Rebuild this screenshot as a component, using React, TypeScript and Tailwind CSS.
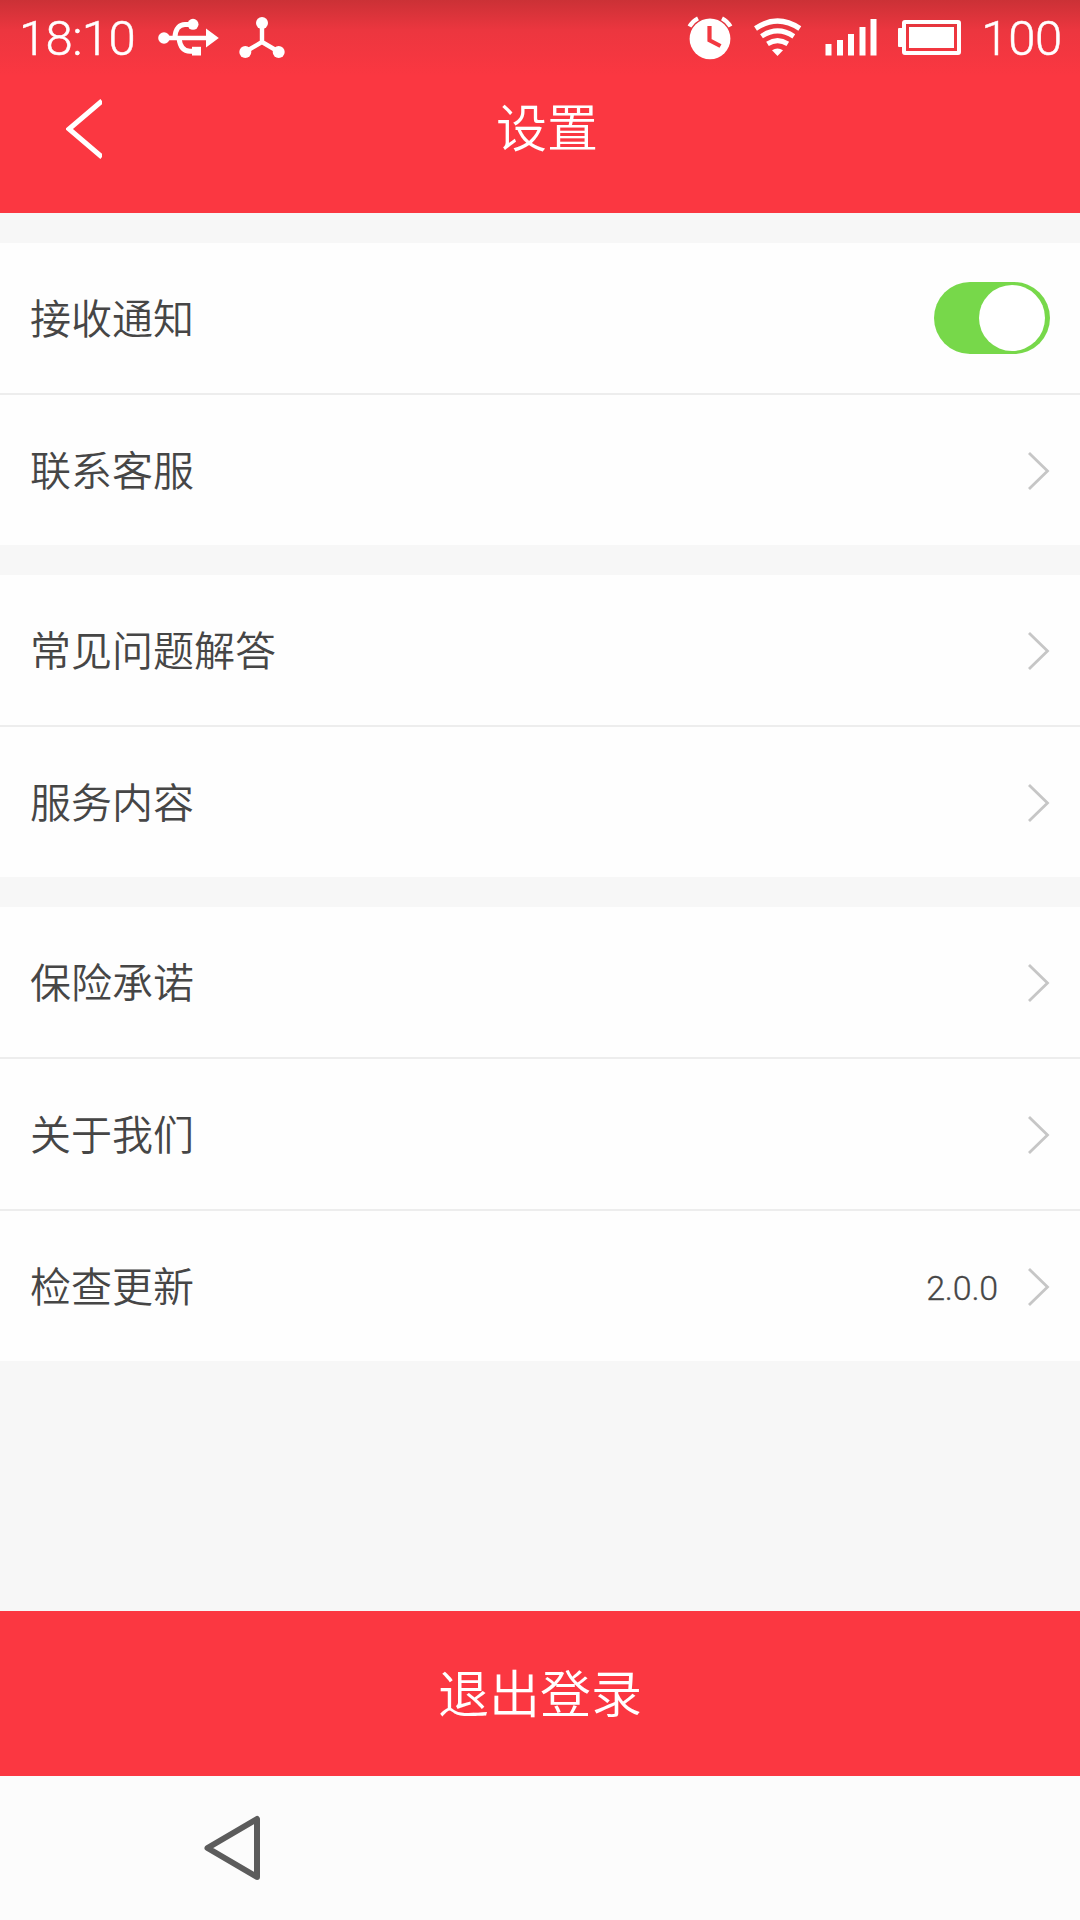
import type { ReactNode } from 'react';

function UsbIcon() {
  return (
    <svg className="absolute left-[158px] top-[18px]" width="61" height="39" viewBox="158 18 61 39" fill="none">
      <path d="M165 38H208" stroke="#fff" strokeWidth="4.4" />
      <circle cx="164" cy="38" r="5.8" fill="#fff" />
      <path d="M206 28.5L218.8 38L206 47.5Z" fill="#fff" />
      <path d="M175 37C175.500 28 180 24.500 185 24.500H192" stroke="#fff" strokeWidth="5" />
      <path d="M179 38C180 47 184 51.300 190 51.300H195" stroke="#fff" strokeWidth="5" />
      <circle cx="193" cy="24.300" r="5.500" fill="#fff" />
      <rect x="192" y="46.800" width="9" height="8.700" fill="#fff" />
    </svg>
  );
}

function HubIcon() {
  return (
    <svg className="absolute left-[238px] top-[16px]" width="48" height="44" viewBox="238 16 48 44" fill="none">
      <path d="M262 23V42L245 52M262 42L279 52" stroke="#fff" strokeWidth="4.400" />
      <circle cx="262" cy="23" r="6" fill="#fff" />
      <circle cx="245.300" cy="52" r="6" fill="#fff" />
      <circle cx="278.700" cy="52" r="6" fill="#fff" />
    </svg>
  );
}

function SystemIcons() {
  return (
    <svg className="absolute left-[684px] top-[12px]" width="284" height="52" viewBox="684 12 284 52" fill="none">
      <circle cx="710" cy="38.800" r="20.400" fill="#fff" />
      <path d="M689.500 26.500Q692.500 21 698 18.300M730.500 26.500Q727.500 21 722 18.300" stroke="#fff" strokeWidth="4.200" />
      <path d="M709.500 26V40.300L720.500 46" stroke="#f23840" strokeWidth="4.200" />
      <path d="M755.500 28.500Q777.500 13.500 799.800 28.500" stroke="#fff" strokeWidth="5.200" />
      <path d="M761.500 36.300Q777.500 25.500 793.800 36.300" stroke="#fff" strokeWidth="5" />
      <path d="M767.500 43.800Q777.500 37.500 787.800 43.800" stroke="#fff" strokeWidth="5" />
      <path d="M772 50.300Q777.500 46.500 783 50.300L777.500 56Z" fill="#fff" />
      <path d="M825.500 44h6v11.500h-6zM837 40h6v15.500h-6zM848 34h6v21.500h-6zM859.500 27h6v28.500h-6zM870.500 19h6v36.500h-6z" fill="#fff" />
      <rect x="904" y="22" width="55" height="31" rx="1" stroke="#fff" strokeWidth="4" />
      <rect x="898" y="28" width="5" height="19" rx="1" fill="#fff" />
      <rect x="909" y="27" width="45" height="21" fill="#fff" />
    </svg>
  );
}

function Chevron() {
  return (
    <svg className="mt-[1px]" width="22" height="38" viewBox="0 0 22 38" fill="none">
      <path d="M1 1L19.500 19L1 37" stroke="#c6c6c6" strokeWidth="2.800" />
    </svg>
  );
}

function Row({ label, children }: { label: string; children?: ReactNode }) {
  return (
    <div className="flex h-[150px] items-center justify-between bg-[#fefefe] pl-[30px] pr-[30px]">
      <span className="pt-[4px] text-[41px] leading-[60px]">{label}</span>
      {children ?? <Chevron />}
    </div>
  );
}

function Group({ children }: { children: ReactNode }) {
  return <section className="flex flex-col gap-[2px] bg-[#ededed]">{children}</section>;
}

export default function App() {
  return (
    <div className="flex h-[1920px] w-[1080px] flex-col overflow-hidden bg-[#f7f7f7] font-['Roboto','Noto_Sans_CJK_SC',sans-serif] font-[350] text-[#464646]">
      <header className="h-[213px] bg-[#fb3741] text-white">
        <div className="relative flex h-[76px] items-center justify-between bg-linear-to-b from-[#cb3136] via-[#ec363f] via-40% to-[#fb3741] pl-[19px] pr-[18px] pt-[2px] text-[49px] leading-[60px] [-webkit-text-stroke:0.5px_white]">
          <span className="tracking-[-0.6px]">18:10</span>
          <UsbIcon />
          <HubIcon />
          <SystemIcons />
          <span className="tracking-[-0.3px]">100</span>
        </div>
        <div className="flex h-[105px] items-center pl-[66px]">
          <svg className="mt-[1px]" width="36" height="60" viewBox="0 0 36 60" fill="none">
            <path d="M36 2L3 30L36 58" stroke="#fff" strokeWidth="5" />
          </svg>
          <h1 className="ml-[394px] pt-[2px] text-[51px] leading-[76px]">设置</h1>
        </div>
      </header>
      <main className="flex flex-col gap-[30px] pt-[30px]">
        <Group>
          <Row label="接收通知">
            <div role="switch" aria-checked="true" className="flex h-[72px] w-[116px] items-center justify-end rounded-full bg-[#77d84a] pr-[5px]">
              <div className="size-[66px] rounded-full bg-white" />
            </div>
          </Row>
          <Row label="联系客服" />
        </Group>
        <Group>
          <Row label="常见问题解答" />
          <Row label="服务内容" />
        </Group>
        <Group>
          <Row label="保险承诺" />
          <Row label="关于我们" />
          <Row label="检查更新">
            <div className="flex items-center gap-[30px]">
              <span className="pt-[3px] text-[34px] leading-[50px] tracking-[-0.2px] [-webkit-text-stroke:0.3px_#464646]">2.0.0</span>
              <Chevron />
            </div>
          </Row>
        </Group>
      </main>
      <button className="mt-auto flex h-[165px] shrink-0 items-center justify-center bg-[#fb3741] pt-[5px] text-[51px] text-white">退出登录</button>
      <nav className="h-[144px] shrink-0 bg-[#fcfcfc] pl-[204px] pt-[38px]">
        <svg width="58" height="68" viewBox="0 0 58 68" fill="none">
          <path d="M53 5V63L3.500 34Z" stroke="#5c5c5c" strokeWidth="6" strokeLinejoin="round" />
        </svg>
      </nav>
    </div>
  );
}
